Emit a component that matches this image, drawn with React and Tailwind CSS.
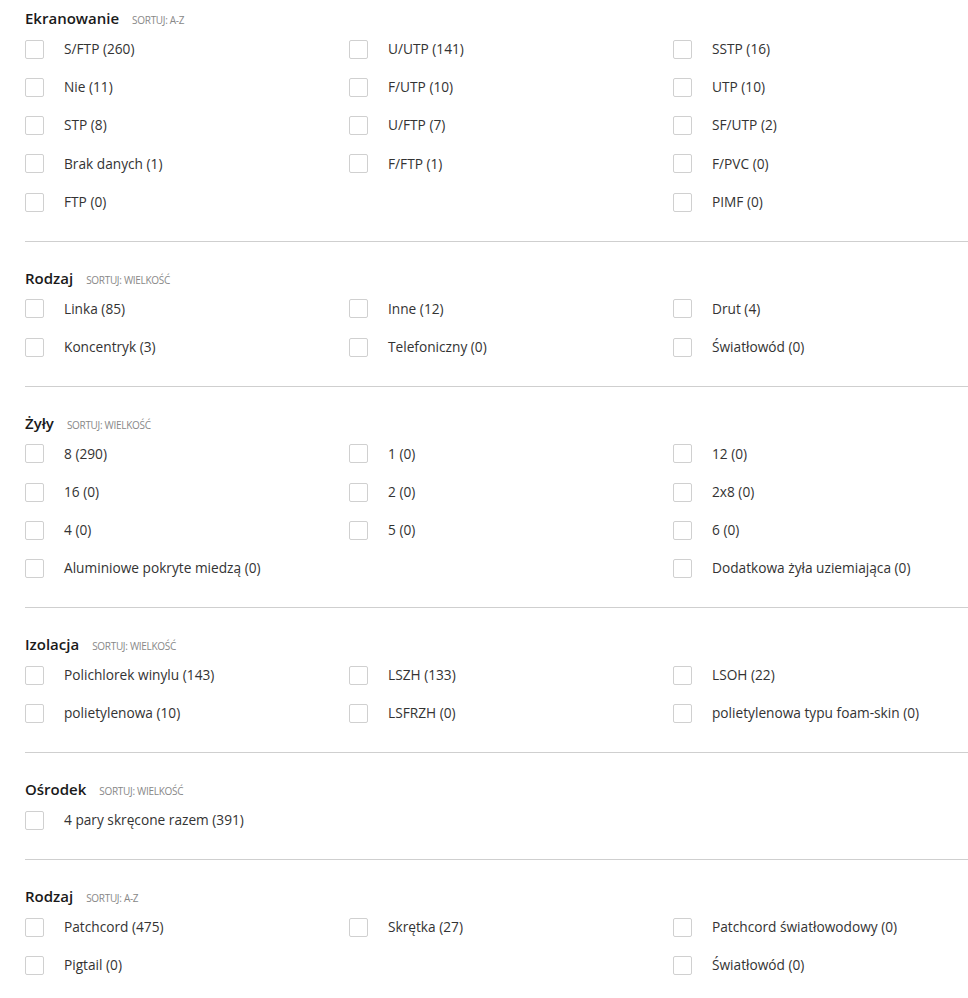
import React from "react";

const sections = [
  {
    title: "Ekranowanie",
    sort: "SORTUJ: A-Z",
    items: [
      "S/FTP (260)", "U/UTP (141)", "SSTP (16)",
      "Nie (11)", "F/UTP (10)", "UTP (10)",
      "STP (8)", "U/FTP (7)", "SF/UTP (2)",
      "Brak danych (1)", "F/FTP (1)", "F/PVC (0)",
      "FTP (0)", null, "PIMF (0)",
    ],
  },
  {
    title: "Rodzaj",
    sort: "SORTUJ: WIELKOŚĆ",
    items: [
      "Linka (85)", "Inne (12)", "Drut (4)",
      "Koncentryk (3)", "Telefoniczny (0)", "Światłowód (0)",
    ],
  },
  {
    title: "Żyły",
    sort: "SORTUJ: WIELKOŚĆ",
    items: [
      "8 (290)", "1 (0)", "12 (0)",
      "16 (0)", "2 (0)", "2x8 (0)",
      "4 (0)", "5 (0)", "6 (0)",
      "Aluminiowe pokryte miedzą (0)", null, "Dodatkowa żyła uziemiająca (0)",
    ],
  },
  {
    title: "Izolacja",
    sort: "SORTUJ: WIELKOŚĆ",
    items: [
      "Polichlorek winylu (143)", "LSZH (133)", "LSOH (22)",
      "polietylenowa (10)", "LSFRZH (0)", "polietylenowa typu foam-skin (0)",
    ],
  },
  {
    title: "Ośrodek",
    sort: "SORTUJ: WIELKOŚĆ",
    items: ["4 pary skręcone razem (391)"],
  },
  {
    title: "Rodzaj",
    sort: "SORTUJ: A-Z",
    items: [
      "Patchcord (475)", "Skrętka (27)", "Patchcord światłowodowy (0)",
      "Pigtail (0)", null, "Światłowód (0)",
    ],
  },
];

const FilterItem = ({ label }) => {
  if (!label) return <div className="h-[38.25px]" />;
  return (
    <label className="flex items-center h-[38.25px] cursor-pointer">
      <span className="w-[19px] h-[19px] border border-[#d0d0d0] rounded-[2px] bg-white shrink-0" />
      <span className="ml-[20px] text-[13.7px] text-[#333] whitespace-nowrap">{label}</span>
    </label>
  );
};

export default function App() {
  return (
    <div
      className="bg-white min-h-screen overflow-hidden pl-[25px]"
      style={{ fontFamily: "'Open Sans', 'Liberation Sans', sans-serif" }}
    >
      {sections.map((section, i) => (
        <div
          key={i}
          className={`${i === 0 ? "pt-[8px]" : "pt-[26px]"} ${
            i === sections.length - 1 ? "" : "pb-[19.5px] border-b border-[#cfcfcf]"
          }`}
        >
          <div className="flex items-baseline h-[20px] mb-[2px]">
            <h3 className="text-[15px] leading-[20px] font-semibold text-[#1a1a1a]">{section.title}</h3>
            <span className="ml-[13px] text-[10px] text-[#888] tracking-[-0.3px] uppercase">
              {section.sort}
            </span>
          </div>
          <div className="grid grid-cols-[324px_324px_1fr]">
            {section.items.map((item, j) => (
              <FilterItem key={j} label={item} />
            ))}
          </div>
        </div>
      ))}
    </div>
  );
}
